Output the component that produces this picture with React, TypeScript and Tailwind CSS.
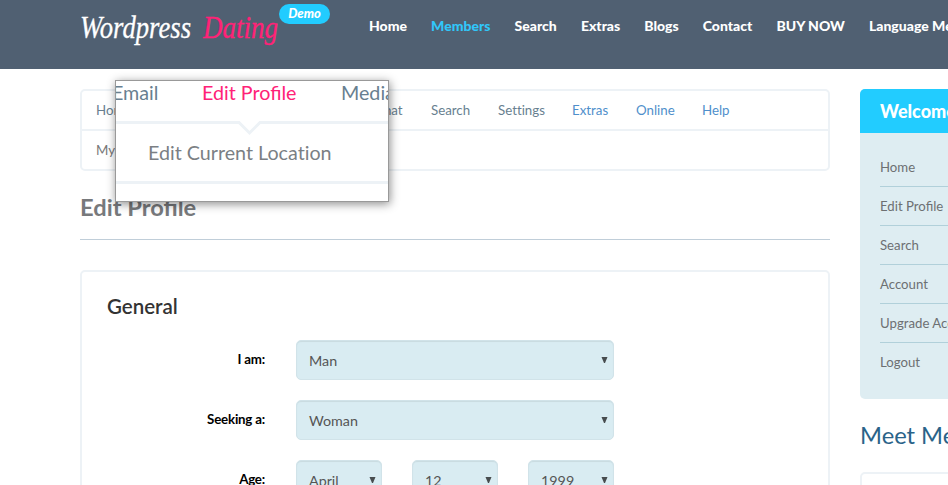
import React from "react";

const mainNav = ["Home", "Members", "Search", "Extras", "Blogs", "Contact", "BUY NOW", "Language Menu"];
const sideLinks = ["Home", "Edit Profile", "Search", "Account", "Upgrade Account", "Logout"];

function Logo() {
  return (
    <div className="relative h-[69px] w-[289px] shrink-0">
      <svg width="260" height="60" viewBox="0 0 260 60" className="block" fontStyle="italic" fontSize="31">
        <text x="0" y="38" fill="#fff" stroke="#fff" strokeWidth="0.3" textLength="111" lengthAdjust="spacingAndGlyphs" className="font-['Liberation_Serif',cursive]">Wordpress</text>
        <text x="123" y="38" fill="#ff2277" stroke="#ff2277" strokeWidth="0.3" textLength="75" lengthAdjust="spacingAndGlyphs" className="font-['Liberation_Serif',cursive]">Dating</text>
      </svg>
      <span className="absolute left-[199px] top-1 flex h-5 w-[51px] items-center justify-center rounded-full bg-[#22ccff] text-[13px] font-black italic text-white">Demo</span>
    </div>
  );
}

function Select({ value, className }: { value: string; className: string }) {
  return (
    <div className={`flex h-10 items-center justify-between rounded-[5px] border border-[#d1e3e9] bg-[#d9ecf2] pl-3 pr-[5px] text-[14.3px] text-[#555] shadow-[inset_0_1px_1px_rgba(0,0,0,0.075)] ${className}`}>
      <span className="pt-px">{value}</span>
      <svg width="7" height="6" viewBox="0 0 7 6" className="-mt-px"><path d="M0.5 0H6.5L4 6H3Z" fill="#484d4f" /></svg>
    </div>
  );
}

function FormRow({ label, children }: { label: string; children: React.ReactNode }) {
  return (
    <div className="mb-5 flex h-10">
      <div className="w-[183px] pt-[9px] text-right text-[13.3px] font-bold leading-5 tracking-[-0.2px] text-black">{label}</div>
      <div className="ml-[31px] flex gap-[30px]">{children}</div>
    </div>
  );
}

function Magnifier() {
  return (
    <div className="absolute left-[115px] top-20 h-[122px] w-[274px] overflow-hidden border border-[#999] bg-white text-[19.7px] shadow-[1px_2px_9px_rgba(0,0,0,0.45)]">
      <div className="flex h-10 whitespace-nowrap leading-6 text-[#687f90]">
        <span className="-ml-[4px] w-[90px] shrink-0">Email</span>
        <span className="w-[139px] shrink-0 text-[#ff2277]">Edit Profile</span>
        <span className="shrink-0">Media</span>
      </div>
      <svg width="274" height="16" viewBox="0 0 274 16" className="block">
        <path d="M0 1.5H123L133.5 12L144 1.5H274" fill="none" stroke="#edf2f6" strokeWidth="3" />
      </svg>
      <div className="h-[47px] border-b-[3px] border-[#edf2f6] pl-8 pt-1 leading-6 text-[#7b7f84] [font-variant-ligatures:none]">Edit Current Location</div>
    </div>
  );
}

export default function App() {
  return (
    <div className="relative h-[485px] w-[948px] overflow-hidden bg-white font-['Lato',sans-serif]">
      <header className="flex h-[69px] bg-[#506072] pl-20">
        <Logo />
        <nav className="flex gap-[24.1px] whitespace-nowrap pt-4 text-[14px] font-black leading-5 text-white">
          {mainNav.map((item) => (
            <span key={item} className={item === "Members" ? "text-[#30c7fa]" : ""}>{item}</span>
          ))}
        </nav>
      </header>

      <div className="flex gap-[30px] pl-20 pt-5">
        <main className="w-[750px] shrink-0">
          <div className="h-[82px] rounded-[5px] border-2 border-[#edf2f6] text-[13.3px] leading-5 text-[#687f90] [font-variant-ligatures:none]">
            <div className="flex h-10 border-b-2 border-[#edf2f6] pl-[14px] pt-[9px]">
              <span className="w-[279px]">Home</span>
              <span className="w-[56px]">Chat</span>
              <span className="w-[67px]">Search</span>
              <span className="w-[74px]">Settings</span>
              <span className="w-[64px] text-[#4f8fcb]">Extras</span>
              <span className="w-[66px] text-[#4f8fcb]">Online</span>
              <span className="text-[#4f8fcb]">Help</span>
            </div>
            <div className="pl-[14px] pt-[9px] text-[#777]">My Profile</div>
          </div>
          <h1 className="mt-5 text-[23.7px] font-bold leading-8 text-[#77797c]">Edit Profile</h1>
          <hr className="mt-4 h-px border-0 bg-[#c0ced9]" />
          <section className="mt-[30px] h-[300px] rounded-[5px] border-2 border-[#edf2f6]">
            <h2 className="mb-[19px] ml-[25px] mt-[19px] text-[20.5px] font-semibold leading-[30px] text-[#333]">General</h2>
            <FormRow label="I am:"><Select value="Man" className="w-[318px]" /></FormRow>
            <FormRow label="Seeking a:"><Select value="Woman" className="w-[318px]" /></FormRow>
            <FormRow label="Age:">
              <Select value="April" className="w-[86px]" />
              <Select value="12" className="w-[86px]" />
              <Select value="1999" className="w-[86px]" />
            </FormRow>
          </section>
        </main>

        <aside className="w-[260px] shrink-0">
          <div className="h-[310px] overflow-hidden rounded-[5px] bg-[#deedf2]">
            <h3 className="h-11 bg-[#22ccff] pl-5 text-[18px] font-black leading-[44px] text-white">Welcome</h3>
            <ul className="ml-5 mt-[15px] text-[13.2px] leading-[38px] text-[#6d7072]">
              {sideLinks.map((link) => (
                <li key={link} className="h-[39px] border-b border-[#b1d0da] last:border-b-0">{link}</li>
              ))}
            </ul>
          </div>
          <h2 className="mt-5 text-[23.7px] leading-8 text-[#2a6389]">Meet Members</h2>
          <div className="mt-[21px] h-20 rounded-[5px] border-2 border-[#edf2f6]" />
        </aside>
      </div>

      <Magnifier />
    </div>
  );
}
